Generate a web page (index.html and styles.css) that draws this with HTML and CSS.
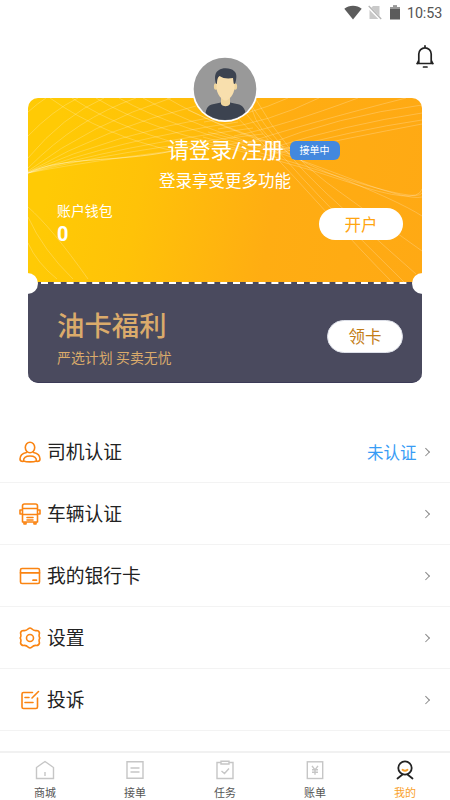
FILE: index.html
```html
<!DOCTYPE html>
<html lang="zh-CN">
<head>
<meta charset="utf-8">
<meta name="viewport" content="width=device-width">
<title>我的</title>
<link rel="stylesheet" href="styles.css">
</head>
<body>
<div class="app">
  <header class="status">
    <svg width="18" height="15" viewBox="0 0 18 15"><path d="M.3 3.8C5-.2 13-.2 17.700 3.800L9 14.500Z" fill="#5c5c5c"/></svg>
    <svg class="sim" width="14" height="15" viewBox="0 0 14 15"><path d="M5 1h6.500v13H1.500V4.500Z" fill="#c9c9c9"/><path d="M0 1.500l13 13" stroke="#fff" stroke-width="3"/><path d="M.7 1l12.500 13" stroke="#b5b5b5" stroke-width="1.300"/></svg>
    <svg class="battery" width="10" height="15" viewBox="0 0 10 15"><path d="M0 2h3V.5h4V2h3v12.500H0Z" fill="#5c5c5c"/><path d="M0 2h3V.5h4V2h3v2H0Z" fill="#999"/></svg>
    <span class="time">10:53</span>
  </header>
  <div class="toolbar">
    <svg width="22" height="26" viewBox="0 0 22 26" fill="none" stroke="#222" stroke-width="1.700" stroke-linecap="round"><path d="M11 1.800v1.200M3 19.500h16M4.800 19V10a6.200 6.200 0 0 1 12.400 0v9M4.800 16.500l-1.500 3M17.200 16.500l1.500 3M9.500 23h3.500"/></svg>
  </div>

  <section class="card">
    <svg class="avatar" viewBox="0 0 66 66">
      <defs><clipPath id="face"><circle cx="33" cy="33" r="31"/></clipPath></defs>
      <circle cx="33" cy="33" r="33" fill="#fff"/>
      <circle cx="33" cy="33" r="31.300" fill="#999"/>
      <g clip-path="url(#face)">
        <path d="M13 66c0-13 2-17 9-18l7-1.500h9l7 1.500c7 1 9 6 10 18Z" fill="#3c4350"/>
        <path d="M29 40h9v8c-2 3-7 3-9 0Z" fill="#efd59c"/>
        <ellipse cx="23.800" cy="30.500" rx="1.900" ry="3.200" fill="#efd59c"/><ellipse cx="43.200" cy="30.500" rx="1.900" ry="3.200" fill="#efd59c"/>
        <path d="M24.500 20h18v12c0 5-5 12.500-9 12.500S24.500 37 24.500 32Z" fill="#f8dfad"/>
        <path d="M24 28c-2-7-1-12 3-14 3-2.500 12-2.500 15 1 3 2 3 7 1 13l-1.300-.5-.7-5.500c-5 1-10 .5-13.500-2-2 1.500-2.500 4-2.500 7.500Z" fill="#3c4350"/>
      </g>
    </svg>
    <div class="wallet">
      <svg class="lines" viewBox="0 0 394 185" fill="none" stroke="#fff" stroke-opacity=".22" stroke-width="1">
        <path d="M0 14Q10 5 18 0M0 38Q25 12 50 0M0 60Q35 18 76 0M0 70Q50 20 108 0M0 73Q65 25 143 0M0 74Q80 29 168 8M0 74Q90 35 190 18M0 75Q90 42 210 24M0 75Q90 48 225 30M0 75Q85 53 235 36M0 75Q80 59 240 42"/>
        <path d="M22 0Q75 38 150 54M44 0Q95 34 180 53M68 0Q120 32 220 53M91 0Q145 31 250 55M115 0Q170 31 265 57M139 0Q190 30 270 55M160 12Q210 36 280 56"/>
        <path d="M176 24Q220 18 260 0M190 31Q240 25 291 0M206 38Q255 28 330 0M221 44Q280 25 378 0M235 48Q310 18 394 7M240 51Q320 26 394 15M245 54Q325 32 394 22M245 56Q325 39 394 26"/>
        <path d="M190 0Q245 55 290 105T365 185M205 0Q250 55 293 100T377 185M218 0Q255 55 297 94T388 176M227 0Q258 55 298 84T394 153M222 0Q225 45 298 74T394 118M180 34Q240 49 310 76T394 99M175 39Q240 56 315 80T394 95M170 44Q250 60 320 84T394 91"/>
        <path d="M0 109Q24 130 60 181M0 119Q15 152 45 181M0 145Q9 165 29 181"/>
        <path d="M0 75C35 58 85 65 145 53" stroke-opacity=".4"/>
      </svg>
      <div class="login"><span class="login-title">请登录/注册</span><span class="badge">接单中</span></div>
      <p class="login-sub">登录享受更多功能</p>
      <div class="balance-row">
        <div class="balance"><span>账户钱包</span><strong>0</strong></div>
        <button class="pill open">开户</button>
      </div>
    </div>
    <svg class="dash" width="394" height="2" viewBox="0 0 394 2"><path d="M10 1H384" stroke="#4a4a5e" stroke-width="2"/><path d="M13 1H384" stroke="#fff" stroke-width="2" stroke-dasharray="7 5.800"/></svg>
    <div class="oil">
      <div><h2>油卡福利</h2><p>严选计划 买卖无忧</p></div>
      <button class="pill claim">领卡</button>
    </div>
    <i class="notch left"></i><i class="notch right"></i>
  </section>

  <main class="menu">
    <div class="row">
      <svg viewBox="0 0 22 22"><ellipse cx="11" cy="6.500" rx="4.700" ry="5.200"/><path d="M7.500 11.500C3 12.500 1 15 1 18c0 2 1 2.500 3 2.500M14.500 11.500C19 12.500 21 15 21 18c0 2-1 2.500-3 2.500M4.500 20c0-3 2.500-5 6.500-5s6.500 2 6.500 5c-3 1.200-10 1.200-13 0Z"/></svg>
      <span class="name">司机认证</span><span class="state">未认证</span><b class="arrow"></b>
    </div>
    <div class="row">
      <svg viewBox="0 0 22 22"><path d="M3.500 13V3q0-2 2-2h11q2 0 2 2v10M3.500 5.500h15M3.500 11.500h15M3.500 12v7h15v-7M5 19v2h2v-2M15 19v2h2v-2M8 14.500h6M8 17h6M3.500 7H1v4h2.500M18.500 7H21v4h-2.500"/></svg>
      <span class="name">车辆认证</span><b class="arrow"></b>
    </div>
    <div class="row">
      <svg viewBox="0 0 22 22"><rect x="1.500" y="3.500" width="19" height="15" rx="1.500"/><path d="M1.500 7.800h19M14 15.200h3.500" stroke-width="1.700"/></svg>
      <span class="name">我的银行卡</span><b class="arrow"></b>
    </div>
    <div class="row">
      <svg viewBox="0 0 22 22"><path d="M9.300 1.800Q11 .2 12.700 1.800Q14.800 4 17.500 3.500Q20 3.600 20.500 6Q19.500 9 20.800 11Q19.500 13 20.500 16Q20 18.400 17.500 18.500Q14.800 18 12.700 20.200Q11 21.800 9.300 20.200Q7.200 18 4.500 18.500Q2 18.400 1.500 16Q2.500 13 1.200 11Q2.500 9 1.500 6Q2 3.600 4.500 3.500Q7.200 4 9.300 1.800Z"/><circle cx="11" cy="11" r="3.500"/></svg>
      <span class="name">设置</span><b class="arrow"></b>
    </div>
    <div class="row">
      <svg viewBox="0 0 22 22"><path d="M13.500 3.500h-9q-1.500 0-1.500 1.500v13q0 1.500 1.500 1.500h12.500q1.500 0 1.500-1.500V9M13 9l6.500-6.500M6 8.500h4M6 13.500h8"/></svg>
      <span class="name">投诉</span><b class="arrow"></b>
    </div>
  </main>

  <nav class="tabs">
    <a><svg viewBox="0 0 20 20"><path d="M1.500 7.500L10 1.500l8.500 6V18.500h-17ZM10 12v4"/></svg>商城</a>
    <a><svg viewBox="0 0 20 20"><path d="M2 1.800h16v16.500H2ZM5.500 8h9M5.500 12h9"/></svg>接单</a>
    <a><svg viewBox="0 0 20 20"><path d="M6 2.500H2v16h16v-16h-4M6 1.300h8v2.700H6ZM6.500 11l3 2.500 4.500-5"/></svg>任务</a>
    <a><svg viewBox="0 0 20 20"><rect x="2.300" y="1.800" width="15.400" height="16.700"/><path d="M7 5.800l3 4 3-4M10 9.800v5M7 9.800h6M7 12.300h6"/></svg>账单</a>
    <a class="active"><svg viewBox="0 0 20 20"><circle cx="10" cy="8" r="6.700"/><path d="M2.500 18.500l5-4M17.500 18.500l-5-4"/><path class="smile" d="M7.500 9.800q2.500 2 5 0"/></svg>我的</a>
  </nav>
</div>
</body>
</html>
```
FILE: styles.css
```css
* { box-sizing: border-box; }
body { margin: 0; background: #fff; color: #222; font-family: Roboto, "Noto Sans CJK SC", sans-serif; }
h2, p { margin: 0; }
.app { width: 450px; height: 800px; display: flex; flex-direction: column; overflow: hidden; }
.status { height: 25px; display: flex; align-items: center; justify-content: flex-end; padding-right: 8px; flex: none; }
.sim { margin-left: 6px; }
.battery { margin-left: 8px; }
.time { margin-left: 7px; font-size: 14.300px; color: #555; letter-spacing: -.1px; width: 35px; line-height: 24px; }
.toolbar { height: 73px; padding: 19px 14px 0 0; text-align: right; flex: none; }
.toolbar svg { display: inline-block; }

.card { position: relative; width: 394px; height: 285px; margin: -.5px auto 0; flex: none; display: flex; flex-direction: column; }
.avatar { position: absolute; z-index: 2; left: 164px; top: -42px; width: 66px; height: 66px; }
.wallet { position: relative; height: 185px; flex: none; border-radius: 10px 10px 0 0; background: linear-gradient(100deg, #ffca05 8%, #ffc208 30%, #ffad12 62%, #ffa914); color: #fff; overflow: hidden; padding-top: 37px; }
.lines { position: absolute; left: 0; top: 0; width: 394px; height: 185px; }
.login, .login-sub, .balance-row { position: relative; }
.login { display: flex; align-items: center; padding-left: 139.500px; height: 32px; }
.login-title { font-size: 21.500px; line-height: 32px; width: 122px; white-space: nowrap; }
.badge { width: 50px; height: 19px; border-radius: 6px; background: #4388de; font-size: 10px; line-height: 19px; text-align: center; }
.login-sub { text-align: center; font-size: 16.500px; line-height: 25px; margin-top: 2px; }
.balance-row { display: flex; justify-content: space-between; padding: 7px 19px 0 29px; }
.balance { display: flex; flex-direction: column; font-size: 13.900px; line-height: 20px; }
.balance strong { font-size: 20px; line-height: 27px; }
.pill { border: 0; border-radius: 17px; padding: 0; background: #fff; font-family: inherit; font-size: 16.500px; text-align: center; }
.open { width: 84px; height: 32px; margin-top: 7px; color: #ffa510; }
.dash { position: absolute; z-index: 1; left: 0; top: 184.500px; }
.oil { height: 100px; background: #4a4a5e; border-radius: 0 0 10px 10px; display: flex; justify-content: space-between; padding: 24px 19px 0 29px; color: #dbab6b; border-bottom: 1px solid #3c3b57; }
.oil h2 { font-size: 27.400px; line-height: 40px; font-weight: 500; }
.oil p { font-size: 13.900px; line-height: 22px; }
.claim { width: 76px; height: 33px; margin-top: 13px; color: #c37d16; border: 1px solid #dcdfe8; }
.notch { position: absolute; z-index: 2; width: 21px; height: 21px; border-radius: 50%; background: #fff; top: 175px; }
.notch.left { left: -11px; }
.notch.right { right: -11px; }

.menu { margin-top: 38.500px; height: 330px; flex: none; overflow: hidden; }
.row { height: 62px; border-bottom: 1px solid #f3f3f3; display: flex; align-items: center; padding: 0 21px 0 19px; }
.row svg { width: 22px; height: 22px; fill: none; stroke: #fa8412; stroke-width: 1.600; stroke-linejoin: round; stroke-linecap: round; flex: none; }
.name { font-size: 18.800px; line-height: 28px; margin-left: 6px; flex: 1; padding-top: 2px; }
.state { font-size: 16.500px; color: #389cf5; margin-right: 6px; }
.arrow { width: 5.500px; height: 5.500px; border-top: 1px solid #888; border-right: 1px solid #888; transform: rotate(45deg); margin-right: 1px; }

.tabs { flex: 1; border-top: 2px solid #f1f1f1; display: flex; background: #fff; }
.tabs a { flex: 1; display: flex; flex-direction: column; align-items: center; font-size: 11px; line-height: 16px; color: #555; padding-top: 7px; }
.tabs svg { width: 20px; height: 20px; margin-bottom: 6px; fill: none; stroke: #c6c6c6; stroke-width: 1.400; }
.tabs .active { color: #f9a12b; }
.tabs .active svg { stroke: #222; stroke-width: 1.800; stroke-linecap: round; }
.tabs .active .smile { stroke: #f9a12b; }
```
